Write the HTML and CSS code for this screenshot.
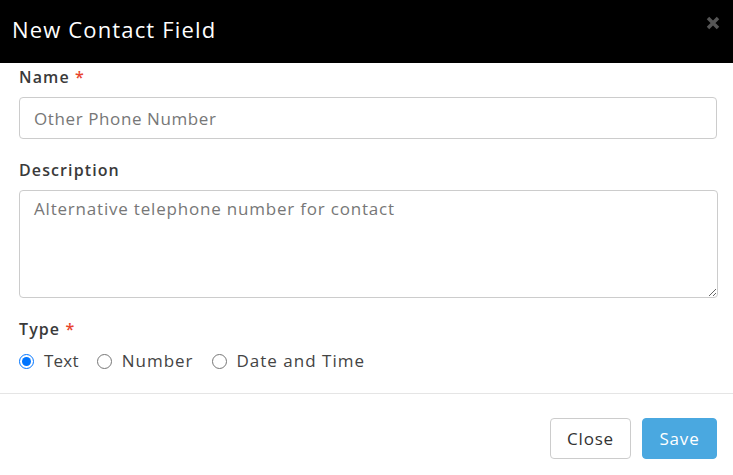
FILE: index.html
```html
<!DOCTYPE html>
<html>
<head>
<meta charset="utf-8">
<link rel="stylesheet" href="styles.css">
</head>
<body>
<div class="modal">
  <div class="modal-header">
    <h1 class="modal-title">New Contact Field</h1>
    <svg class="close-x" width="14" height="14" viewBox="0 0 14 14"><path d="M2 2 L12 12 M12 2 L2 12" stroke="#555" stroke-width="3.5" stroke-linecap="butt"/></svg>
  </div>
  <div class="modal-body">
    <label class="field-label">Name <span class="req">*</span></label>
    <input class="text-input" type="text" value="Other Phone Number">
    <label class="field-label gap-top">Description</label>
    <textarea class="text-area">Alternative telephone number for contact</textarea>
    <label class="field-label gap-top">Type <span class="req">*</span></label>
    <div class="radio-row">
      <label class="radio-item"><input type="radio" name="t" checked><span>Text</span></label>
      <label class="radio-item"><input type="radio" name="t"><span>Number</span></label>
      <label class="radio-item"><input type="radio" name="t"><span>Date and Time</span></label>
    </div>
  </div>
  <div class="modal-footer">
    <button class="btn btn-close">Close</button>
    <button class="btn btn-save">Save</button>
  </div>
</div>
</body>
</html>
```
FILE: styles.css
```css
* { box-sizing: border-box; }
body {
  margin: 0;
  font-family: "Open Sans", "Liberation Sans", sans-serif;
  background: #fff;
  color: #333;
}
.modal { width: 733px; }
.modal-header {
  background: #000;
  height: 63px;
  display: flex;
  justify-content: space-between;
  align-items: center;
  padding: 0 13px 0 12px;
}
.modal-title {
  margin: 0;
  color: #fff;
  font-size: 22px;
  font-weight: 500;
  letter-spacing: 1.15px;
  margin-top: -6px;
}
.close-x {
  align-self: flex-start;
  margin-top: 16px;
}
.modal-body {
  padding: 3px 15px 20px 19px;
  display: flex;
  flex-direction: column;
}
.field-label {
  font-size: 16px;
  font-weight: 600;
  letter-spacing: 1.1px;
  line-height: 22px;
  color: #3a3a3a;
  margin-bottom: 9px;
}
.gap-top { margin-top: 20px; }
.req { color: #e8442e; }
.text-input, .text-area {
  font-family: inherit;
  font-size: 17px;
  letter-spacing: 0.6px;
  color: #777;
  border: 1px solid #ccc;
  border-radius: 4px;
  padding: 0 14px;
  width: 698px;
  outline: none;
}
.text-input { height: 42px; }
.text-area {
  width: 699px;
  height: 108px;
  padding-top: 7px;
  letter-spacing: 0.8px;
  resize: vertical;
  line-height: 22px;
}
.radio-row {
  display: flex;
  gap: 18px;
  margin-top: 0;
  line-height: 24px;
}
.radio-item {
  display: flex;
  align-items: center;
  gap: 10px;
  font-size: 17px;
  letter-spacing: 1px;
  color: #444;
}
.radio-item:first-child span { letter-spacing: 0.2px; }
.radio-item input {
  margin: 0;
  width: 15px;
  height: 15px;
}
.modal-footer {
  border-top: 1px solid #e5e5e5;
  display: flex;
  justify-content: flex-end;
  gap: 11px;
  padding: 24px 16px 0 0;
}
.btn {
  font-family: inherit;
  font-size: 17px;
  letter-spacing: 0.8px;
  height: 41px;
  border-radius: 4px;
  padding: 0;
}
.btn-close {
  background: #fff;
  border: 1px solid #ccc;
  color: #333;
  width: 81px;
}
.btn-save {
  background: #4aa8e0;
  border: 1px solid #4aa8e0;
  color: #fff;
  width: 75px;
}
```
